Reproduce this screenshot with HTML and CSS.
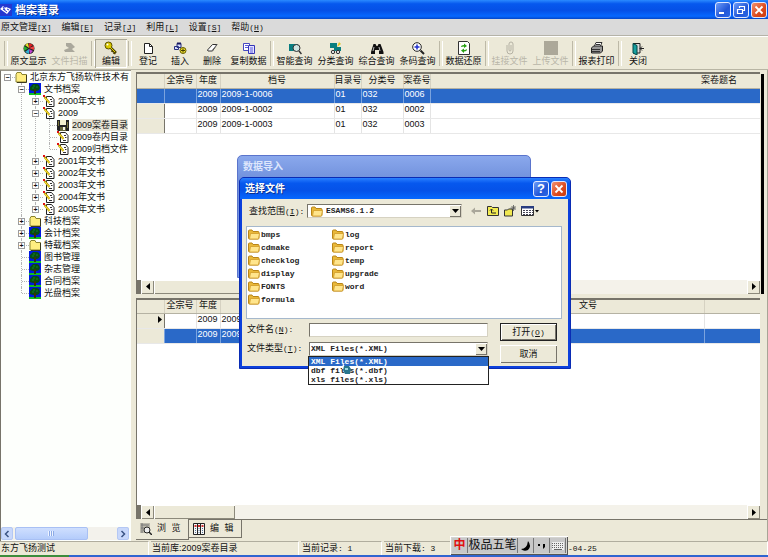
FILE: index.html
```html
<!DOCTYPE html>
<html lang="zh-CN">
<head>
<meta charset="utf-8">
<title>档案著录</title>
<link rel="stylesheet" href="styles.css">
</head>
<body>
<svg class="defs" aria-hidden="true">
  <symbol id="folder" viewBox="0 0 12 12"><path d="M1 3.5V11h10.500V3.500H7L6 1.500H2z" fill="#ffee80" stroke="#8a8330"/><path d="M11.500 4v7.500H2" fill="none" stroke="#3c3a1c"/></symbol>
  <symbol id="oak" viewBox="0 0 12 12"><path d="M0 0h12v12H0z" fill="#0018e0"/><path d="M0 10h12v2H0z" fill="#10c020"/><path d="M2 3l2-2h4l2 1 1 3-1 2-2 1H4L1 7V4z" fill="#064d12"/><path d="M5 6h2v5H5z" fill="#3a3008"/><path d="M4 3h2M7 4h2M3 5h2" stroke="#108428"/></symbol>
  <symbol id="doc" viewBox="0 0 12 12"><path d="M3.500 1.500h5l2.500 3v7H3.500z" fill="#fff" stroke="#222"/><path d="M7 4.500h2M8 6.500h1.500M6 9.500h3" stroke="#333"/><path d="M1.500 2l5 6" stroke="#b89a00" stroke-width="2"/><path d="M2 3l4.500 5" stroke="#ffe838"/><path d="M0 0h2v2H0z" fill="#e01010"/></symbol>
  <symbol id="disk" viewBox="0 0 12 12"><path d="M0 1h12v11H1l-1-1z" fill="#222"/><path d="M3 1h6v5H3z" fill="#f3f0cf"/><path d="M3 8h6v4H3z" fill="#66663a"/><path d="M6 8h2v3H6z" fill="#f5f5e8"/><path d="M1 2h1v5H1zM10 3h1v6h-1z" fill="#77753c"/></symbol>
  <symbol id="xpfolder" viewBox="0 0 12 11"><path d="M.5 2q0-1 1-1H4l1 1.500h5q1 0 1 1V9q0 1-1 1H1.500q-1 0-1-1z" fill="#e9b838" stroke="#b98518"/><path d="M2.500 4.500h9L10.500 9.500q0 .5-1 .5H1.500z" fill="#ffe58c" stroke="#d09c28" stroke-width=".8"/></symbol>
  <symbol id="down" viewBox="0 0 7 4"><path d="M0 0h7L3.500 4z" fill="#000"/></symbol>
  <symbol id="left" viewBox="0 0 4 7"><path d="M4 0v7L0 3.500z" fill="#000"/></symbol>
  <symbol id="right" viewBox="0 0 4 7"><path d="M0 0v7l4-3.500z" fill="#000"/></symbol>
</svg>
<div class="app">
  <header class="titlebar">
    <svg class="logo" viewBox="0 0 12 12"><path d="M0 0h12v12H0z" fill="#2438d0"/><path d="M0 5l3-3 2 2 1-1 5 2-4 5z" fill="#fff"/><path d="M3 5l4 3M3 3l2 3M7 5l2 1" stroke="#2438d0"/></svg>
    <h1>档案著录</h1>
    <button class="cap" aria-label="最小化"><svg viewBox="0 0 14 14"><path d="M3 10h5" stroke="#fff" stroke-width="2"/></svg></button>
    <button class="cap" aria-label="还原"><svg viewBox="0 0 14 14"><path d="M5.500 5V3.500h5v4H9M3.500 6.500h5v4h-5z" fill="none" stroke="#fff" stroke-width="1.200"/></svg></button>
    <button class="cap close" aria-label="关闭窗口"><svg viewBox="0 0 14 14"><path d="M3.500 3.500l7 7m0-7l-7 7" stroke="#fff" stroke-width="1.800"/></svg></button>
  </header>
  <nav class="menu">
    <button>原文管理<span class="key">[<u>X</u>]</span></button>
    <button>编辑<span class="key">[<u>E</u>]</span></button>
    <button>记录<span class="key">[<u>J</u>]</span></button>
    <button>利用<span class="key">[<u>L</u>]</span></button>
    <button>设置<span class="key">[<u>S</u>]</span></button>
    <button>帮助<span class="key">(<u>H</u>)</span></button>
  </nav>
  <div class="toolbar">
    <i class="sep"></i>
    <button class="tool wide"><svg viewBox="0 0 14 14"><circle cx="7" cy="7.500" r="5.500" fill="#222"/><path d="M7 7L3 4l3-2z" fill="#e8e030"/><path d="M7 7V2l4 2z" fill="#e02020"/><path d="M7 7l5-2v4z" fill="#f04040"/><path d="M7 8l4 2-3 3z" fill="#c040d0"/><path d="M7 8v5l-4-2z" fill="#30b0d0"/><path d="M6 7.500L2 10V5z" fill="#20b030"/></svg>原文显示</button>
    <button class="tool wide" disabled><svg viewBox="0 0 14 14"><path d="M3 2h5l4 4-3 2 3 3H2l-1-2 5-2-3-2z" fill="#aaa89c"/></svg>文件扫描</button>
    <i class="sep"></i>
    <button class="tool pressed"><svg viewBox="0 0 14 14"><path d="M6 6l6 6M9 9l-1 2M11 11l-1 2" stroke="#4e4300" stroke-width="2.500"/><circle cx="4.500" cy="4.500" r="3.500" fill="#d9c800" stroke="#5c5200"/><path d="M5 5l6 6" stroke="#e6d600"/><circle cx="3.500" cy="3.500" r="1" fill="#fff"/></svg>编辑</button>
    <i class="sep"></i>
    <button class="tool"><svg viewBox="0 0 14 14"><path d="M3.500 2.500h5l3 3v7h-8z" fill="#fff" stroke="#222"/><path d="M8.500 2.500v3h3" fill="none" stroke="#222"/></svg>登记</button>
    <button class="tool"><svg viewBox="0 0 14 14"><path d="M4 2.500h4v4H4zM1.500 5.500h4v3h-4z" fill="#d8e0ff" stroke="#283080"/><path d="M4 2.500h4" stroke="#181860" stroke-width="2"/><circle cx="10" cy="9.500" r="3" fill="#eee030" stroke="#665c00"/><path d="M10 7.500v4m-2-2h4" stroke="#443c00"/></svg>插入</button>
    <button class="tool"><svg viewBox="0 0 14 14"><path d="M2.500 9l5-5.500h4.500l-4.500 6.500H3z" fill="#fff" stroke="#333"/><path d="M7 9.500L12 3.500" stroke="#777"/></svg>删除</button>
    <button class="tool wide"><svg viewBox="0 0 14 14"><path d="M1.500 2.500h6v7h-6z" fill="#fff" stroke="#4848c0"/><path d="M6.500 4.500h6v8h-6z" fill="#e4e4ff" stroke="#3434b8"/><path d="M3 4.500h3M3 6.500h3M8 7h3M8 9h3M8 11h3" stroke="#5a5ae0"/></svg>复制数据</button>
    <i class="sep"></i>
    <button class="tool wide"><svg viewBox="0 0 14 14"><path d="M1 3h9v7H1z" fill="#087e80"/><circle cx="8.500" cy="7" r="3.500" fill="#cfe4e2" stroke="#333"/><path d="M11 10l2.500 3" stroke="#333" stroke-width="1.500"/></svg>智能查询</button>
    <button class="tool wide"><svg viewBox="0 0 14 14"><path d="M1 2h7v5H1zM5 6h7v4H5z" fill="#087e80"/><path d="M10 1l2 2-4 3z" fill="#e4c620"/><circle cx="4" cy="11" r="1.700" fill="#ddd" stroke="#333"/><circle cx="9" cy="11" r="1.700" fill="#ddd" stroke="#333"/></svg>分类查询</button>
    <button class="tool wide"><svg viewBox="0 0 14 14"><path d="M3.500 3h2l1 2h1l1-2h2l3 8v2H9V9H5v4H1v-2z" fill="#111"/><path d="M4 6l-1 4M9 6l1 4" stroke="#bbb"/></svg>综合查询</button>
    <button class="tool wide"><svg viewBox="0 0 14 14"><circle cx="6" cy="6" r="4.300" fill="#fff" stroke="#222"/><path d="M6 3.500v5M3.500 6h5" stroke="#2030d0" stroke-width="1.500"/><path d="M9.500 9.500l3.500 3.500" stroke="#222" stroke-width="2"/></svg>条码查询</button>
    <i class="sep"></i>
    <button class="tool wide"><svg viewBox="0 0 14 14"><path d="M1.500.5h9l2 2v11h-11z" fill="#fff" stroke="#333"/><path d="M4 6q0-2 3-2V2.500L10 5 7 7V5.500Q5 5.500 4 6zM10 8q0 2.500-3 2.500V12L4 9.500 7 7.500V9q2 0 3-1z" fill="#28a010"/></svg>数据还原</button>
    <i class="sep"></i>
    <button class="tool wide" disabled><svg viewBox="0 0 14 14"><path d="M4 4v6q0 3 3 3t3-3V3q0-2-2-2T6 3v6q0 1 1 1t1-1V4" fill="none" stroke="#b5b2a4"/></svg>挂接文件</button>
    <button class="tool wide" disabled><svg viewBox="0 0 14 14"><path d="M0 0h14v14H0z" fill="#aca899"/></svg>上传文件</button>
    <i class="sep"></i>
    <button class="tool wide"><svg viewBox="0 0 14 14"><path d="M4 6l2-4.500h6L10 6" fill="#fff" stroke="#333"/><path d="M1.500 7l2-2h9v5l-2 2h-9z" fill="#999" stroke="#222"/><path d="M2 8.500h8M6 3.500h4M2 10.500h8" stroke="#333"/></svg>报表打印</button>
    <i class="sep"></i>
    <button class="tool"><svg viewBox="0 0 14 14"><path d="M2 2.500h7V12H2" fill="#ddd" stroke="#222"/><path d="M2 2.500l4 2V14l-4-2z" fill="#18a0a0" stroke="#044"/><path d="M9 7.500h4M11 5.500l-2 2 2 2" stroke="#222" fill="none"/></svg>关闭</button>
  </div>

  <main class="main">
    <aside class="side">
      <ul class="tree root">
        <li><div class="row"><span class="exp"><b>−</b></span><svg><use href="#folder"/></svg><span>北京东方飞扬软件技术有</span></div>
          <ul class="tree">
            <li><div class="row"><span class="exp"><b>−</b></span><svg><use href="#oak"/></svg><span>文书档案</span></div>
              <ul class="tree">
                <li><div class="row"><span class="exp"><b>+</b></span><svg><use href="#doc"/></svg><span>2000年文书</span></div></li>
                <li><div class="row"><span class="exp"><b>−</b></span><svg><use href="#doc"/></svg><span>2009</span></div>
                  <ul class="tree">
                    <li><div class="row"><span class="exp"></span><svg><use href="#disk"/></svg><span class="current">2009案卷目录</span></div></li>
                    <li><div class="row"><span class="exp"></span><svg><use href="#doc"/></svg><span>2009卷内目录</span></div></li>
                    <li><div class="row"><span class="exp"></span><svg><use href="#doc"/></svg><span>2009归档文件</span></div></li>
                  </ul></li>
                <li><div class="row"><span class="exp"><b>+</b></span><svg><use href="#doc"/></svg><span>2001年文书</span></div></li>
                <li><div class="row"><span class="exp"><b>+</b></span><svg><use href="#doc"/></svg><span>2002年文书</span></div></li>
                <li><div class="row"><span class="exp"><b>+</b></span><svg><use href="#doc"/></svg><span>2003年文书</span></div></li>
                <li><div class="row"><span class="exp"><b>+</b></span><svg><use href="#doc"/></svg><span>2004年文书</span></div></li>
                <li><div class="row"><span class="exp"><b>+</b></span><svg><use href="#doc"/></svg><span>2005年文书</span></div></li>
              </ul></li>
            <li><div class="row"><span class="exp"><b>+</b></span><svg><use href="#folder"/></svg><span>科技档案</span></div></li>
            <li><div class="row"><span class="exp"><b>+</b></span><svg><use href="#oak"/></svg><span>会计档案</span></div></li>
            <li><div class="row"><span class="exp"><b>+</b></span><svg><use href="#folder"/></svg><span>特载档案</span></div></li>
            <li><div class="row"><span class="exp"></span><svg><use href="#oak"/></svg><span>图书管理</span></div></li>
            <li><div class="row"><span class="exp"></span><svg><use href="#oak"/></svg><span>杂志管理</span></div></li>
            <li><div class="row"><span class="exp"></span><svg><use href="#oak"/></svg><span>合同档案</span></div></li>
            <li><div class="row"><span class="exp"></span><svg><use href="#oak"/></svg><span>光盘档案</span></div></li>
          </ul></li>
      </ul>
      <div class="xpscroll">
        <button aria-label="向左"><svg viewBox="0 0 8 8"><path d="M5.500 1l-3 3 3 3" fill="none" stroke="#3b5484" stroke-width="1.500"/></svg></button>
        <span class="xpthumb"><i></i></span>
        <button aria-label="向右"><svg viewBox="0 0 8 8"><path d="M2.500 1l3 3-3 3" fill="none" stroke="#3b5484" stroke-width="1.500"/></svg></button>
      </div>
    </aside>

    <section class="work">
      <div class="panel upper">
        <table>
          <colgroup><col class="c-sel"><col class="c-fonds"><col class="c-year"><col class="c-no"><col class="c-dir"><col class="c-class"><col class="c-dir"><col></colgroup>
          <thead><tr><th></th><th>全宗号</th><th>年度</th><th>档号</th><th>目录号</th><th>分类号</th><th>案卷号</th><th class="subject">案卷题名</th></tr></thead>
          <tbody>
            <tr class="selected"><td></td><td></td><td>2009</td><td>2009-1-0006</td><td>01</td><td>032</td><td>0006</td><td></td></tr>
            <tr><td></td><td></td><td>2009</td><td>2009-1-0002</td><td>01</td><td>032</td><td>0002</td><td></td></tr>
            <tr><td></td><td></td><td>2009</td><td>2009-1-0003</td><td>01</td><td>032</td><td>0003</td><td></td></tr>
          </tbody>
        </table>
        <div class="scroll"><i class="block"></i><button aria-label="向左"><svg class="side-arrow"><use href="#left"/></svg></button><span class="thumb long"></span><button class="end" aria-label="向右"><svg class="side-arrow"><use href="#right"/></svg></button></div>
      </div>
      <div class="panel lower">
        <table>
          <colgroup><col class="c-sel"><col class="c-fonds"><col class="c-year"><col class="c-mid"><col class="c-doc"><col></colgroup>
          <thead><tr><th></th><th>全宗号</th><th>年度</th><th></th><th>文号</th><th></th></tr></thead>
          <tbody>
            <tr><td class="mark"><svg class="side-arrow"><use href="#right"/></svg></td><td></td><td>2009</td><td>2009</td><td></td><td></td></tr>
            <tr class="selected"><td></td><td></td><td>2009</td><td>2009</td><td></td><td></td></tr>
          </tbody>
        </table>
        <div class="scroll"><i class="block"></i><button aria-label="向左"><svg class="side-arrow"><use href="#left"/></svg></button><span class="thumb"></span><button class="end" aria-label="向右"><svg class="side-arrow"><use href="#right"/></svg></button></div>
      </div>
      <div class="tabs">
        <button class="tab active"><svg viewBox="0 0 12 12"><path d="M0 0h10v10H0z" fill="#bbb8aa"/><path d="M1 2h8M1 5h3M2 0v10" stroke="#777"/><circle cx="7" cy="7" r="3" fill="#eee" stroke="#222"/><path d="M9 9l3 3" stroke="#222" stroke-width="1.500"/></svg>浏 览</button>
        <button class="tab"><svg viewBox="0 0 12 12"><path d="M.5.500h11v11H.5z" fill="#f7f7f7" stroke="#222"/><path d="M4.500 0v12M7.500 0v12" stroke="#222"/><path d="M2.500 2v2M6 2v2M9.500 2v2" stroke="#d03030" stroke-width="2"/><path d="M2.500 5v6M6 5v6M9.500 5v6" stroke="#579" stroke-dasharray="1 1"/></svg>编 辑</button>
        <span class="rest"></span>
      </div>
    </section>
  </main>

  <footer class="status">
    <span class="s-user">东方飞扬测试</span>
    <span class="s-lib">当前库:2009案卷目录</span>
    <span class="s-rec">当前记录<span class="key">: 1</span></span>
    <span class="s-down">当前下载<span class="key">: 3</span></span>
    <span class="s-date"><span class="key">-04-25</span></span>
  </footer>
  <div class="taskbar"></div>

  <div class="window behind"><h2>数据导入</h2></div>

  <div class="window dialog" role="dialog" aria-labelledby="dlg-title">
    <div class="dlg-bar">
      <h2 id="dlg-title">选择文件</h2>
      <button class="cap help" aria-label="帮助">?</button>
      <button class="cap close" aria-label="关闭对话框"><svg viewBox="0 0 14 14"><path d="M3.500 3.500l7 7m0-7l-7 7" stroke="#fff" stroke-width="1.800"/></svg></button>
    </div>
    <div class="dlg-body">
      <div class="lookin">
        <label for="place">查找范围<span class="key">(<u>I</u>):</span></label>
        <div class="combo place"><svg class="lead"><use href="#xpfolder"/></svg><select id="place"><option>ESAMS6.1.2</option></select><span class="drop"><svg><use href="#down"/></svg></span></div>
        <button class="nav" aria-label="后退"><svg viewBox="0 0 12 12"><path d="M1 6l4-3.500V5h6v2H5v2.500z" fill="#aaa79a"/></svg></button>
        <button class="nav" aria-label="向上一级"><svg viewBox="0 0 12 12"><path d="M.5 1.500h4l1 1h6v8H.5z" fill="#f3ec50" stroke="#333"/><path d="M3 5.500L4.500 4 6 5.500M4.500 4.500V8H9" stroke="#222" fill="none"/></svg></button>
        <button class="nav" aria-label="新建文件夹"><svg viewBox="0 0 12 12"><path d="M.5 5h3l1-1h4v7h-8z" fill="#f0e850" stroke="#333"/><path d="M9.500 0v6M6.500 3h5.500M7.500 1l4 4m0-4l-4 4" stroke="#555" stroke-width=".8"/></svg></button>
        <button class="nav views" aria-label="查看"><svg viewBox="0 0 18 12"><path d="M.5 1.500h12v9H.5z" fill="#fff" stroke="#333"/><path d="M0 1h13v2.500H0z" fill="#283c80"/><path d="M2 5.500h10M2 7.500h10M2 9.500h10" stroke="#445" stroke-dasharray="2 1"/><path d="M14 5h4l-2 2.500z"/></svg></button>
      </div>
      <ul class="files">
        <li><svg><use href="#xpfolder"/></svg>bmps</li><li><svg><use href="#xpfolder"/></svg>cdmake</li><li><svg><use href="#xpfolder"/></svg>checklog</li><li><svg><use href="#xpfolder"/></svg>display</li><li><svg><use href="#xpfolder"/></svg>FONTS</li><li><svg><use href="#xpfolder"/></svg>formula</li>
        <li><svg><use href="#xpfolder"/></svg>log</li><li><svg><use href="#xpfolder"/></svg>report</li><li><svg><use href="#xpfolder"/></svg>temp</li><li><svg><use href="#xpfolder"/></svg>upgrade</li><li><svg><use href="#xpfolder"/></svg>word</li>
      </ul>
      <div class="form">
        <div class="fields">
          <label for="fname">文件名<span class="key">(<u>N</u>):</span></label>
          <input id="fname" type="text">
          <label for="ftype">文件类型<span class="key">(<u>T</u>):</span></label>
          <div class="combo"><select id="ftype"><option>XML Files(*.XML)</option><option>dbf files(*.dbf)</option><option>xls files(*.xls)</option></select><span class="drop"><svg><use href="#down"/></svg></span>
            <ul class="options"><li class="hot">XML Files(*.XML)</li><li>dbf files(*.dbf)</li><li>xls files(*.xls)</li></ul>
            <svg class="busy" viewBox="0 0 10 12"><path d="M1 0l3 6H0z" fill="#fff"/><path d="M2 3h5l2 3-1 5H3L1 7z" fill="#28768c"/><path d="M3 5h3v2H3z" fill="#9bd8e0"/></svg>
          </div>
        </div>
        <div class="actions">
          <button class="push default">打开<span class="key">(<u>O</u>)</span></button>
          <button class="push">取消</button>
        </div>
      </div>
    </div>
  </div>

  <div class="ime">
    <button class="zh">中</button><button class="name">极品五笔</button>
    <button aria-label="半角"><svg viewBox="0 0 12 12"><path d="M8 1q4 5 0 9-4 2-7-1 6 0 7-8z" fill="#000"/></svg></button>
    <button aria-label="标点"><svg viewBox="0 0 12 12"><path d="M2 4h2v2H2zM7 4h2v3L7 9z" fill="#000"/></svg></button>
    <button aria-label="软键盘"><svg viewBox="0 0 12 12"><path d="M0 2h12v8H0z" fill="#eee"/><path d="M0 3.500h12M0 5.500h12M0 7.500h12" stroke="#666" stroke-dasharray="1 1"/><path d="M2 9.500h8" stroke="#666"/></svg></button>
  </div>
</div>
</body>
</html>
```
FILE: styles.css
```css
* { box-sizing: border-box; }

body {
  margin: 0;
  font: 9px/12px "Liberation Sans", "Noto Sans CJK SC", sans-serif;
  color: #111;
  background: #ece9d8;
}

button, input, select {
  font: inherit;
  color: inherit;
  margin: 0;
  padding: 0;
  border: 0;
  background: none;
  border-radius: 0;
}

h1, h2, ul { margin: 0; padding: 0; list-style: none; }
svg { display: block; flex: none; }
.defs { position: absolute; width: 0; height: 0; }
.key { font-family: "Liberation Mono", monospace; font-size: 8px; white-space: pre; }

.app {
  position: relative;
  display: flex;
  flex-direction: column;
  height: 100vh;
  overflow: hidden;
}

/* Title bar */
.titlebar {
  display: flex;
  align-items: center;
  gap: 2px;
  height: 19px;
  padding-right: 1px;
  background: linear-gradient(#2a8aff, #0658ee 20%, #0550e6 55%, #0668ff 85%, #0446c8);
  flex: none;
}
.logo { width: 12px; height: 12px; }
.titlebar h1 {
  flex: 1;
  padding-left: 1px;
  font-size: 11px;
  line-height: 16px;
  color: #fff;
  text-shadow: 1px 1px #0a2f8c;
}
.cap {
  width: 16px;
  height: 16px;
  display: grid;
  place-items: center;
  border: 1px solid #dfe8ff;
  border-radius: 3px;
  background: linear-gradient(135deg, #6d9cf8, #2257d8 60%, #2a66e4);
  color: #fff;
}
.cap svg { width: 14px; height: 14px; }
.cap.close { background: linear-gradient(135deg, #f09070, #dc4a1e 60%, #c83c10); }

/* Menu */
.menu {
  display: flex;
  gap: 10px;
  height: 17px;
  padding: 0 1px;
  background: #dadada;
  border-bottom: 1px solid #b5b3a8;
  flex: none;
}

/* Toolbar */
.toolbar {
  display: flex;
  height: 34px;
  padding: 2px 0 1px 3px;
  border-top: 1px solid #fff;
  border-bottom: 1px solid #b8b5a4;
  flex: none;
}
.sep { flex: none; width: 5px; display: flex; justify-content: center; }
.sep::before { content: ""; width: 2px; margin: 2px 0; border-left: 1px solid #bdb9a7; border-right: 1px solid #fff; }
.tool {
  width: 32px;
  padding-top: 2px;
  display: flex;
  flex-direction: column;
  align-items: center;
  flex: none;
  white-space: nowrap;
}
.tool.wide { width: 41px; }
.tool svg { width: 14px; height: 14px; }
.tool:disabled { color: #b9b6a8; }
.tool.pressed { background: #e5e2d2; box-shadow: inset 1px 1px #aaa796, inset -1px -1px #fff; }

/* Navigation tree */
.main { flex: 1; min-height: 0; display: flex; }
.side {
  width: 131px;
  flex: none;
  display: flex;
  flex-direction: column;
  overflow: hidden;
  background: #fdfffc;
  border-left: 1px solid #77746a;
  border-top: 1px solid #9a978a;
}
.tree .tree { padding-left: 14px; }
.root { flex: 1; }
.tree li { position: relative; }
.tree .tree > li::before {
  content: "";
  position: absolute;
  left: 20px;
  top: 0;
  bottom: 0;
  border-left: 1px dotted #b4b4b4;
}
.tree .tree > li::before { left: 6px; }
.tree .tree > li:last-child::before { bottom: auto; height: 6px; }
.row { display: flex; align-items: center; height: 12px; white-space: nowrap; position: relative; }
.row svg { width: 12px; height: 12px; margin-right: 3px; }
.exp { position: relative; width: 14px; height: 12px; flex: none; display: flex; align-items: center; padding-left: 3px; }
.exp::before { content: ""; position: absolute; left: 7px; right: 0; top: 6px; border-top: 1px dotted #b4b4b4; }
.exp b {
  position: relative;
  width: 7px;
  height: 7px;
  border: 1px solid #9c9c9c;
  background: #fff;
  font: bold 7px/5px "Liberation Sans", sans-serif;
  text-align: center;
}
.current { background: #e8e5d6; }

.xpscroll { display: flex; height: 13px; margin: 0 2px 1px 0; background: #f3f2ec; }
.xpscroll button {
  width: 12px;
  display: grid;
  place-items: center;
  border: 1px solid #b4c8f4;
  border-radius: 2px;
  background: #c8d8fb;
}
.xpscroll button:last-child { margin-left: auto; }
.xpscroll svg { width: 8px; height: 8px; }
.xpthumb {
  width: 57%;
  margin-left: 2px;
  display: grid;
  place-items: center;
  border: 1px solid #a8c0f4;
  border-radius: 2px;
  background: linear-gradient(#cfdffe, #b4ccfb);
}
.xpthumb i { width: 6px; height: 5px; background: repeating-linear-gradient(90deg, #eef4ff 0 1px, #8caae6 1px 2px); }

/* Record grids */
.work {
  flex: 1;
  min-width: 0;
  display: flex;
  flex-direction: column;
  padding: 2px 0 1px 5px;
  border-right: 1px solid #a8a596;
}
.panel {
  position: relative;
  flex: 1;
  min-height: 0;
  display: flex;
  flex-direction: column;
  margin-right: 7px;
  background: #fff;
  border: 1px solid #77746a;
  border-width: 2px 0 0 1px;
}
.upper::after {
  content: "";
  position: absolute;
  left: calc(100% + 1px);
  top: 0;
  bottom: 0;
  width: 3px;
  background: #000;
}
.lower { margin-top: 4px; }
table { width: 100%; table-layout: fixed; border-collapse: collapse; }
.c-sel { width: 27px; }
.c-fonds { width: 32px; }
.c-year { width: 24px; }
.c-no { width: 114px; }
.c-dir { width: 27px; }
.c-class { width: 42px; }
.c-mid { width: 252px; }
.c-doc { width: 232px; }
th {
  height: 14px;
  padding: 0 0 1px;
  font-weight: 400;
  line-height: 11px;
  background: #ece9d8;
  border-right: 1px solid #d6d2c2;
  border-bottom: 1px solid #b5b2a3;
  white-space: nowrap;
}
.subject { text-align: right; padding-right: 23px; }
td {
  height: 15px;
  padding: 0 0 4px 1px;
  border-right: 1px solid #e4e4e4;
  border-bottom: 1px solid #e8e8e8;
  line-height: 10px;
  white-space: nowrap;
}
td:first-child { background: #ece9d8; border-right-color: #77746a; }
td:last-child, th:last-child { border-right: 0; }
.selected td, .selected td:first-child { background: #2a69c8; color: #fff; }
.selected td { border-right-color: #7ba3de; }
.lower .selected td:first-child { background: #ece9d8; }
.side-arrow { width: 4px; height: 7px; }
.mark .side-arrow { margin-left: 20px; }

.scroll { display: flex; height: 14px; margin-top: auto; background: #f4f2ea; }
.block { width: 4px; background: #77746a; }
.scroll button, .thumb {
  background: #ece9d8;
  box-shadow: inset 1px 1px #fff, inset -1px -1px #8c897b;
}
.scroll button { width: 13px; display: grid; place-items: center; }
.thumb { width: 81px; }
.thumb.long { width: 60%; }
.scroll .end { margin-left: auto; }

/* View tabs */
.tabs { display: flex; height: 21px; flex: none; }
.tab {
  display: flex;
  align-items: center;
  gap: 5px;
  width: 53px;
  padding-left: 4px;
  font-family: "Liberation Mono", "Noto Sans CJK SC", monospace;
  border-right: 1px solid #77746a;
  border-bottom: 1px solid #77746a;
  white-space: nowrap;
}
.tab:not(.active) { border-top: 1px solid #77746a; margin-bottom: 2px; }
.tab svg { width: 12px; height: 12px; }
.rest { flex: 1; border-top: 1px solid #77746a; }

/* Status bar */
.status { display: flex; gap: 2px; height: 14px; flex: none; }
.status > span { padding-left: 1px; border-top: 1px solid #b0ad9e; border-right: 1px solid #fff; white-space: nowrap; }
.s-user { width: 149px; }
.s-lib { width: 148px; }
.s-rec { width: 81px; }
.s-down { width: 181px; }
.s-date { flex: 1; }
.taskbar { height: 2px; flex: none; background: linear-gradient(90deg, #3c8c3c 9%, #3064d0 9%); }

/* Floating windows */
.window { position: absolute; }
.window h2 { font-size: 10px; line-height: 16px; color: #fff; }
.behind {
  left: 237px;
  top: 155px;
  width: 294px;
  height: 123px;
  padding: 3px 5px;
  border: 1px solid #5a74cc;
  border-radius: 5px 5px 0 0;
  background: linear-gradient(#8aa8ec, #7090dc 20%, #7c9ce8);
}
.behind h2 { color: #dde6fc; }
.dialog {
  left: 239px;
  top: 177px;
  width: 332px;
  border: 1px solid #0a2cb4;
  border-radius: 5px 5px 0 0;
  padding: 0 2px 2px;
  background: #0c40dc;
}
.dlg-bar {
  display: flex;
  align-items: center;
  gap: 2px;
  height: 21px;
  margin: 0 -2px;
  padding: 0 3px 0 5px;
  border-radius: 4px 4px 0 0;
  background: linear-gradient(#2a80ff, #0658ee 25%, #0552e8 60%, #0668ff);
}
.dlg-bar h2 { flex: 1; text-shadow: 1px 1px #0a2f8c; }
.help { font: bold 13px/14px "Liberation Sans", sans-serif; }
.dlg-body { padding: 4px 6px 3px 5px; background: #ece9d8; }
.lookin { display: flex; align-items: center; height: 16px; padding-left: 2px; }
.lookin label { width: 58px; white-space: nowrap; }
.combo { position: relative; height: 14px; }
.combo select, .fields input {
  display: block;
  width: 100%;
  height: 14px;
  padding-left: 1px;
  font: bold 8px/12px "Liberation Mono", monospace;
  color: #222;
  background: #fff;
  border: 1px solid #77746a;
  border-right-color: #d6d2c2;
  border-bottom-color: #d6d2c2;
  appearance: none;
  outline: 0;
}
.place { width: 155px; margin-right: 8px; }
.combo.place select { padding-left: 18px; }
.lead { position: absolute; left: 4px; top: 2px; width: 12px; height: 11px; }
.drop {
  position: absolute;
  right: 1px;
  top: 1px;
  width: 12px;
  height: 12px;
  display: grid;
  place-items: center;
  background: #ece9d8;
  box-shadow: inset 1px 1px #fff, inset -1px -1px #77746a;
  pointer-events: none;
}
.drop svg { width: 7px; height: 4px; }
.nav { margin-right: 5px; }
.nav svg { width: 12px; height: 12px; }
.nav.views svg { width: 18px; }

.files {
  display: grid;
  grid-template-rows: repeat(6, 13px);
  grid-auto-flow: column;
  grid-auto-columns: 84px;
  height: 93px;
  margin-top: 7px;
  margin-left: -1px;
  padding: 1px;
  background: #fff;
  border: 1px solid #a5b8cc;
  font: bold 8px/13px "Liberation Mono", monospace;
  color: #222;
}
.files li { display: flex; align-items: center; gap: 1px; }
.files svg { width: 12px; height: 11px; }

.form { display: flex; gap: 12px; padding: 4px 5px 0 0; }
.fields {
  flex: 1;
  display: grid;
  grid-template-columns: 62px 1fr;
  row-gap: 5px;
  align-content: start;
}
.fields label { height: 14px; white-space: nowrap; }
.actions { width: 57px; display: grid; row-gap: 4px; }
.push {
  height: 18px;
  background: #ece9d8;
  box-shadow: inset 1px 1px #fff, inset -1px -1px #77746a;
}
.push.default { border: 1px solid #222; }
.options {
  position: absolute;
  left: -1px;
  right: -1px;
  top: 14px;
  z-index: 1;
  background: #fff;
  border: 1px solid #222;
  font: bold 8px/9px "Liberation Mono", monospace;
  color: #222;
}
.options li { padding-left: 2px; }
.options .hot { background: #2a69c8; color: #fff; }
.busy { position: absolute; left: 33px; top: 21px; width: 10px; height: 12px; z-index: 2; }

/* Input method bar */
.ime {
  position: absolute;
  left: 450px;
  bottom: 2px;
  display: flex;
  height: 19px;
  padding: 2px;
  background: #d4d4d0;
  box-shadow: inset 1px 1px #fff, inset -1px -1px #555;
}
.ime button {
  width: 16px;
  display: grid;
  place-items: center;
  background: #c8c8c8;
  border-right: 1px solid #777;
  font-size: 12px;
  line-height: 15px;
  white-space: nowrap;
}
.ime svg { width: 12px; height: 12px; }
.ime .zh { color: #e01010; font-weight: 700; }
.ime .name { width: 50px; }
```
